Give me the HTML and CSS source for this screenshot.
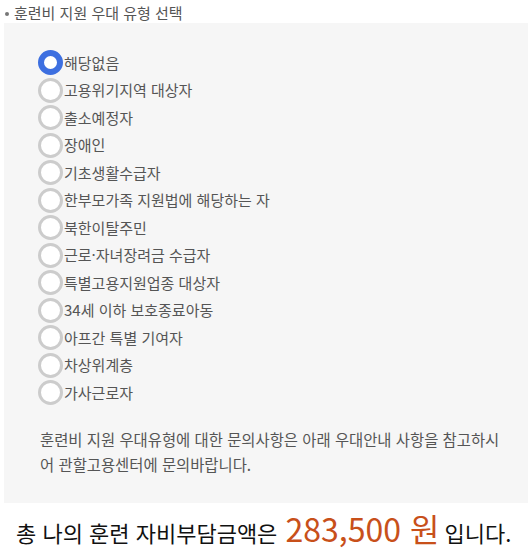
FILE: index.html
```html
<!DOCTYPE html>
<html lang="ko">
<head>
    <meta charset="UTF-8">
    <meta name="viewport" content="width=device-width, initial-scale=1.0">
    <title>훈련비 지원 우대 유형 선택</title>
    <link rel="stylesheet" href="styles.css">
</head>
<body>
    <div class="section-title">훈련비 지원 우대 유형 선택</div>

    <div class="choice-box">
        <ul class="radio-list">
            <li><label><input type="radio" name="prefType" checked><span>해당없음</span></label></li>
            <li><label><input type="radio" name="prefType"><span>고용위기지역 대상자</span></label></li>
            <li><label><input type="radio" name="prefType"><span>출소예정자</span></label></li>
            <li><label><input type="radio" name="prefType"><span>장애인</span></label></li>
            <li><label><input type="radio" name="prefType"><span>기초생활수급자</span></label></li>
            <li><label><input type="radio" name="prefType"><span>한부모가족 지원법에 해당하는 자</span></label></li>
            <li><label><input type="radio" name="prefType"><span>북한이탈주민</span></label></li>
            <li><label><input type="radio" name="prefType"><span>근로·자녀장려금 수급자</span></label></li>
            <li><label><input type="radio" name="prefType"><span>특별고용지원업종 대상자</span></label></li>
            <li><label><input type="radio" name="prefType"><span>34세 이하 보호종료아동</span></label></li>
            <li><label><input type="radio" name="prefType"><span>아프간 특별 기여자</span></label></li>
            <li><label><input type="radio" name="prefType"><span>차상위계층</span></label></li>
            <li><label><input type="radio" name="prefType"><span>가사근로자</span></label></li>
        </ul>
        <p class="note">훈련비 지원 우대유형에 대한 문의사항은 아래 우대안내 사항을 참고하시어 관할고용센터에 문의바랍니다.</p>
    </div>

    <p class="total">총 나의 훈련 자비부담금액은 <span class="amount">283,500 원</span> 입니다.</p>
</body>
</html>
```

FILE: styles.css
```css
body {
    margin: 0;
    padding: 0 0 0 4px;
    font-family: "Noto Sans CJK KR", "Noto Sans", sans-serif;
    color: #555;
    background-color: #fff;
    overflow: hidden;
}

.section-title {
    position: relative;
    height: 21px;
    line-height: 21px;
    padding-top: 2px;
    padding-left: 10px;
    font-size: 15px;
    color: #555;
}
.section-title::before {
    content: "";
    position: absolute;
    left: 1px;
    top: 12px;
    width: 4px;
    height: 4px;
    border-radius: 50%;
    background-color: #777;
}

.choice-box {
    background-color: #f6f6f6;
    padding: 26px 24px 26px 34px;
}

.radio-list {
    list-style: none;
    margin: 0;
    padding: 0;
}
.radio-list li {
    height: 27.5px;
}
.radio-list label {
    display: flex;
    align-items: center;
    height: 27.5px;
    cursor: pointer;
}
.radio-list input {
    appearance: none;
    -webkit-appearance: none;
    margin: 0 1px 0 0;
    width: 25px;
    height: 25px;
    border: 3px solid #ccc;
    border-radius: 50%;
    background-color: #fff;
    box-sizing: border-box;
    flex-shrink: 0;
}
.radio-list input:checked {
    border: 6px solid #3d6fe0;
}
.radio-list span {
    font-size: 15px;
    color: #555;
    line-height: 20px;
}

.note {
    margin: 20px 0 0 2px;
    font-size: 15.4px;
    line-height: 25px;
    color: #555;
}

.total {
    margin: 3px 0 0 12px;
    font-size: 22px;
    color: #111;
    white-space: nowrap;
    line-height: 44px;
}
.amount {
    font-size: 32px;
    color: #c8501a;
    margin: 0 -1px 0 2px;
}
```
